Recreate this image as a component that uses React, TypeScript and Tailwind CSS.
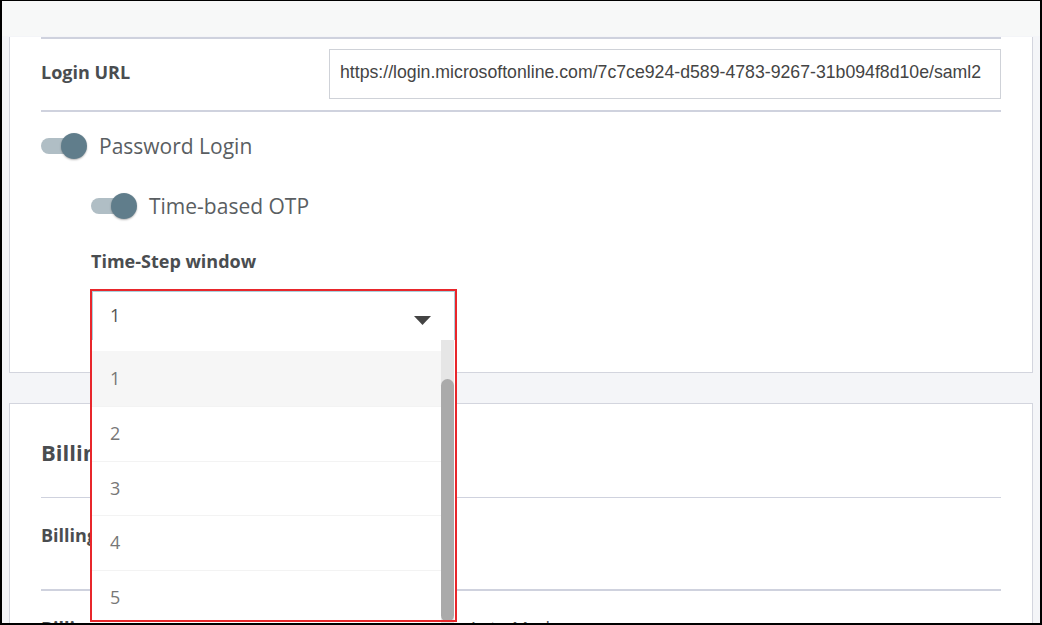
import React from "react";

const sans = "font-['Open_Sans','Liberation_Sans',sans-serif]";

function Toggle({ label }: { label: string }) {
  return (
    <div className="flex items-center h-[26px]">
      <div className="relative w-[44px] h-[16px] rounded-full bg-[#b0bec5]">
        <div className="absolute right-[-2px] top-[-5px] w-[26px] h-[26px] rounded-full bg-[#607d8b] shadow-[0_1px_2px_rgba(0,0,0,0.3)]" />
      </div>
      <span className="ml-[14px] text-[21px] leading-[26px] text-[#5a5e62]">{label}</span>
    </div>
  );
}

function Divider({ thick = false }: { thick?: boolean }) {
  return <div className={thick ? "h-[2px] bg-[#cfd2de]" : "h-px bg-[#cfd2de]"} />;
}

const options = ["1", "2", "3", "4", "5"];

export default function App() {
  return (
    <div
      className={`${sans} relative w-[1042px] h-[625px] box-border overflow-hidden border-black border-l-2 border-t border-r-2 border-b-2 bg-[#f4f5f8]`}
    >
      {/* top strip */}
      <div className="h-[35px] bg-[#f7f8f8]" />

      {/* SSO card */}
      <div className="ml-[7px] w-[1024px] bg-white border-x border-b border-[#d3d5de] px-[31px] pb-[32px]">
        <div className="mt-px">
          <Divider thick />
        </div>

        <div className="flex items-center mt-[10px]">
          <div className="w-[288px] text-[18px] leading-[24px] font-bold text-[#4a4d50] -mt-[4px]">Login URL</div>
          <div className="flex-1 h-[50px] border border-[#cfd2d8] flex items-center pl-[10px] pb-[4px] font-['Liberation_Sans',Arial,sans-serif] text-[17.7px] text-[#444]">
            https://login.microsoftonline.com/7c7ce924-d589-4783-9267-31b094f8d10e/saml2
          </div>
        </div>

        <div className="mt-[11px]">
          <Divider thick />
        </div>

        <div className="mt-[21px]">
          <Toggle label="Password Login" />
        </div>

        <div className="ml-[50px]">
          <div className="mt-[34px]">
            <Toggle label="Time-based OTP" />
          </div>

          <div className="mt-[30px] text-[18px] leading-[24px] font-bold text-[#4a4d50]">
            Time-Step window
          </div>

          {/* select with open list */}
          <div className="relative mt-[18px] ml-px w-[363px]">
            <div className="h-[49px] border-x border-t border-[#a9d0dc] bg-white flex items-center justify-between pl-[17px] pr-[23px]">
              <span className="text-[18px] text-[#555] -mt-[2px]">1</span>
              <svg width="17" height="9" viewBox="0 0 17 9" className="mt-[8px]">
                <polygon points="0,0 17,0 8.5,9" fill="#444" />
              </svg>
            </div>

            <div className="absolute left-0 top-full w-[363px] h-[290px] bg-white z-10">
              <div className="pt-[11px] pr-[14px]">
                {options.map((o, i) => (
                  <div
                    key={o}
                    className={
                      i === 0
                        ? "h-[55px] flex items-center pl-[18px] bg-[#f6f6f6] text-[18px] text-[#777]"
                        : "h-[54.5px] flex items-center pl-[18px] border-t border-[#f3f3f3] text-[18px] text-[#777]"
                    }
                  >
                    {o}
                  </div>
                ))}
              </div>
              <div className="absolute right-px top-0 w-[13px] h-full bg-[#e6e6e6]">
                <div className="mt-[39px] h-[243px] rounded-full bg-[#aaaaaa]" />
              </div>
            </div>

            {/* highlight annotation */}
            <div className="absolute -left-[2px] -top-[2px] w-[367px] h-[333px] border-2 border-[#e8262b] z-20 pointer-events-none" />
          </div>
        </div>
      </div>

      {/* Billing card */}
      <div className="mt-[30px] ml-[7px] w-[1024px] bg-white border border-[#d3d5de] px-[31px] pt-[33px]">
        <div className="text-[22px] leading-[30px] font-bold text-[#4a4d50]">Billing Settings</div>
        <div className="mt-[30px]">
          <Divider />
        </div>
        <div className="mt-[25px] text-[18px] leading-[24px] font-bold text-[#4a4d50]">Billing Email</div>
        <div className="mt-[42px]">
          <Divider thick />
        </div>
        <div className="flex mt-[25px] text-[18px] leading-[24px]">
          <div className="w-[288px] font-bold text-[#4a4d50]">Billing Mode</div>
          <div className="text-[#555]">Prepaid Credit – Auto Mode</div>
        </div>
      </div>
    </div>
  );
}
